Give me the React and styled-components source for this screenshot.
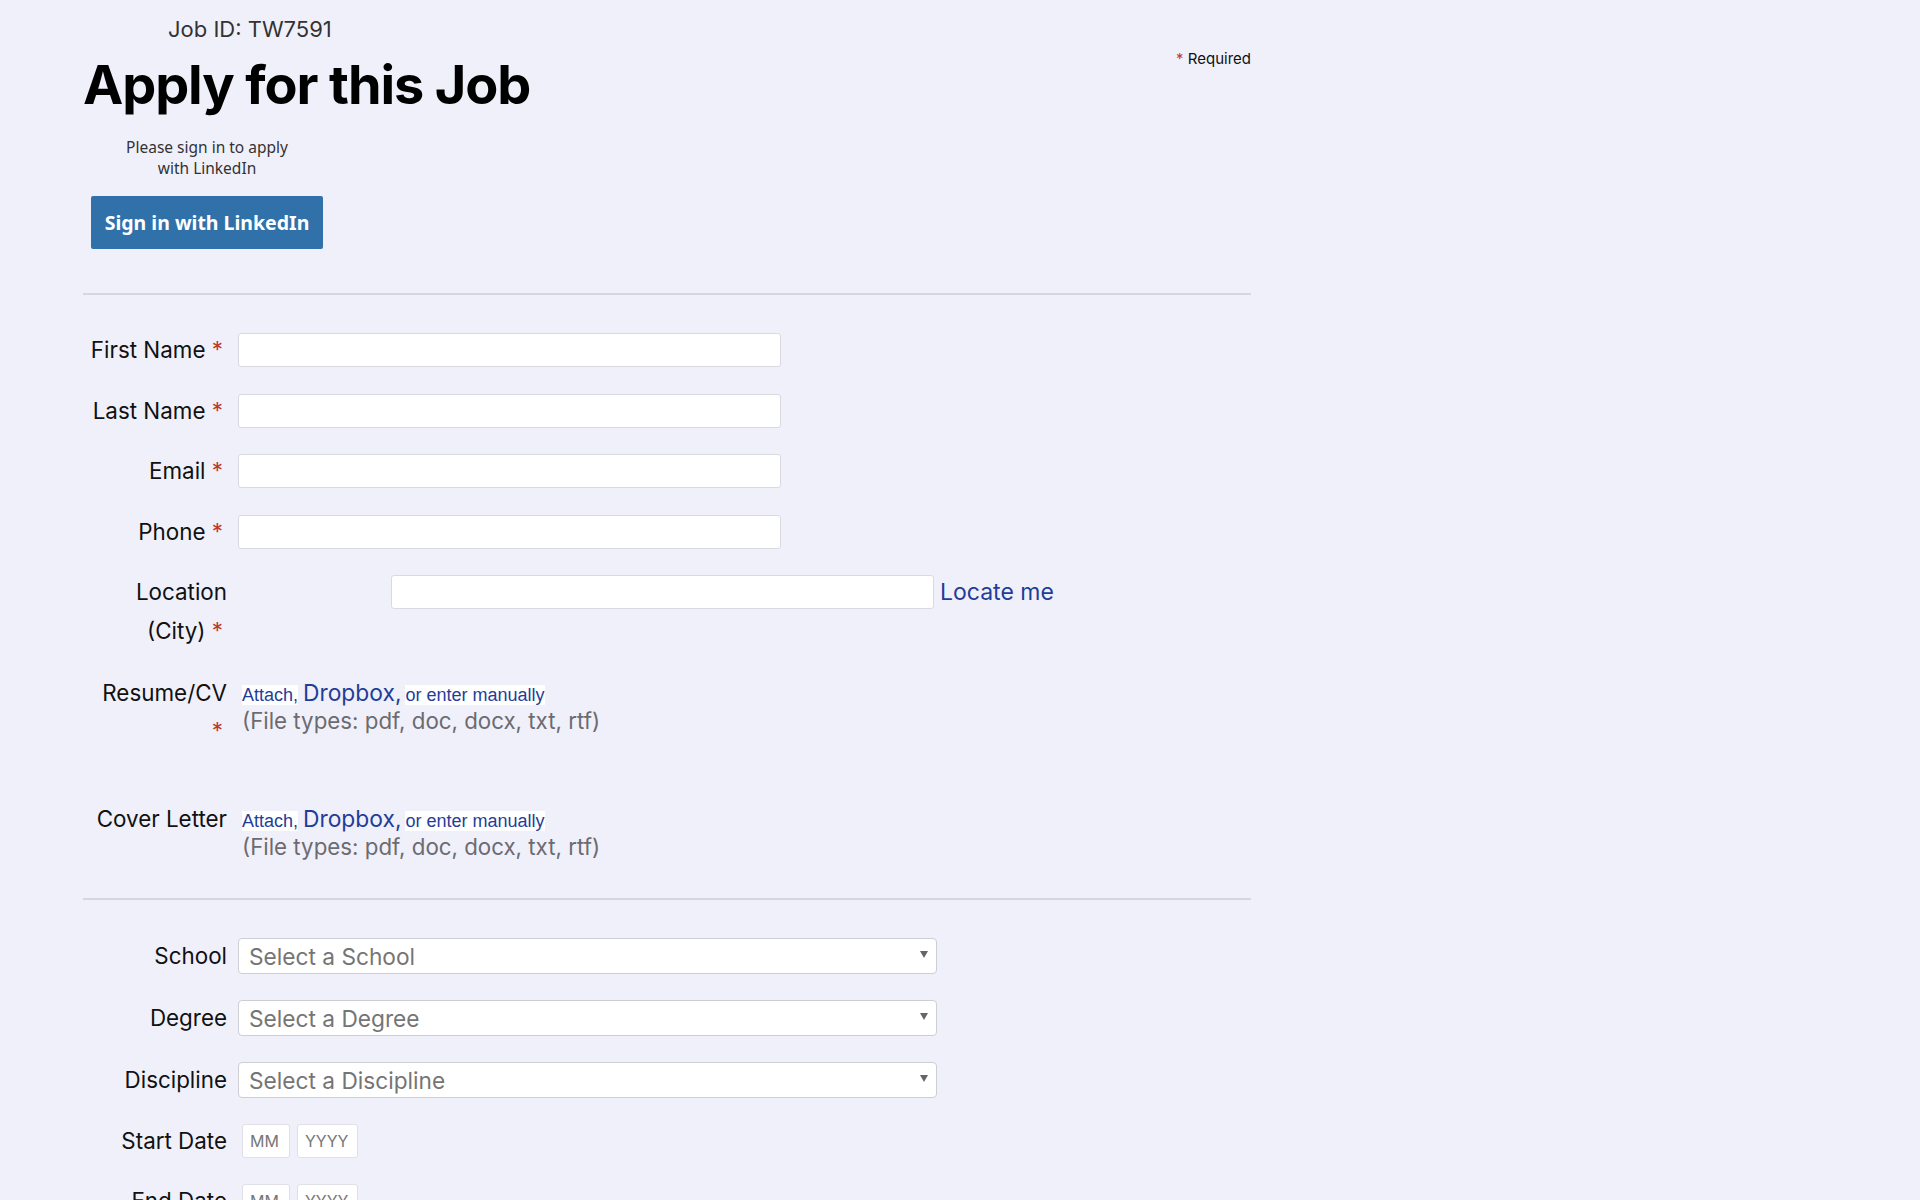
import React from "react";
import styled, { createGlobalStyle } from "styled-components";

const Global = createGlobalStyle`
  html, body { margin: 0; padding: 0; background: #f0f0fb; }
  body { font-family: Inter, "Liberation Sans", sans-serif; color: #111; }
  * { box-sizing: border-box; }
`;

const Page = styled.div`
  width: 1920px;
  min-height: 1200px;
  padding: 0 0 0 83px;
  background: #f0f0fb;
`;

const Container = styled.div`
  width: 1168px;
`;

const Header = styled.div`
  display: flex;
  justify-content: space-between;
  align-items: flex-start;
`;

const HeaderLeft = styled.div`
  display: flex;
  flex-direction: column;
`;

const JobId = styled.div`
  margin: 15px 0 0 85px;
  font-family: Inter, sans-serif;
  font-size: 22px;
  color: #333;
  line-height: 28px;
`;

const Title = styled.h1`
  margin: 10px 0 0 0;
  font-family: Inter, sans-serif;
  font-weight: 700;
  font-size: 54px;
  line-height: 64px;
  letter-spacing: -1.1px;
  color: #000;
`;

const Required = styled.div`
  margin-top: 49px;
  font-family: Inter, sans-serif;
  font-size: 15px;
  color: #111;
`;

const Star = styled.span`
  color: #c0392b;
  margin-right: ${(p) => p.$mr || 0}px;
`;

const SignIn = styled.div`
  display: flex;
  flex-direction: column;
  align-items: center;
  width: 232px;
  margin: 20px 0 0 8px;
`;

const SignInNote = styled.div`
  font-family: "Noto Sans", sans-serif;
  font-size: 15.5px;
  line-height: 21px;
  color: #333;
  text-align: center;
  width: 175px;
`;

const LinkedInButton = styled.button`
  margin-top: 17px;
  width: 232px;
  height: 53px;
  background: #3071a9;
  border: none;
  border-radius: 2px;
  color: #fff;
  font-family: "Noto Sans", sans-serif;
  font-weight: 700;
  font-size: 19.5px;
`;

const Rule = styled.hr`
  border: none;
  border-top: 2px solid #d6d6e0;
  margin: ${(p) => p.$top}px 0 0 0;
`;

const Fields = styled.div`
  display: flex;
  flex-direction: column;
  gap: ${(p) => p.$gap}px;
  margin-top: ${(p) => p.$top}px;
`;

const Row = styled.div`
  display: grid;
  grid-template-columns: 144px 1fr;
  column-gap: 11px;
  align-items: start;
  min-height: ${(p) => p.$min || 0}px;
`;

const Label = styled.label`
  font-family: Inter, sans-serif;
  font-size: 22.4px;
  line-height: ${(p) => p.$lh || 34}px;
  margin: ${(p) => p.$mt || 0}px 0 ${(p) => p.$mb || 0}px 0;
  padding-left: 4px;
  text-align: right;
  color: #111;
`;

const TextInput = styled.input`
  width: ${(p) => p.$w || 543}px;
  height: 34px;
  margin-left: ${(p) => p.$offset || 0}px;
  background: #fff;
  border: 1px solid #d9d9e0;
  border-radius: 3px;
  padding: 0 8px;
  font-size: 16px;
`;

const InlineGroup = styled.div`
  display: flex;
  align-items: center;
  gap: 6px;
`;

const LocateLink = styled.a`
  font-family: Inter, sans-serif;
  font-size: 23px;
  color: #1f3d99;
  text-decoration: none;
`;

const Upload = styled.div`
  padding: 5px 0 0 4px;
  display: flex;
  flex-direction: column;
`;

const UploadLinks = styled.div`
  line-height: 26px;
  color: #1f3d99;
  white-space: nowrap;
`;

const SmallLink = styled.span`
  font-family: "Liberation Sans", Arial, sans-serif;
  font-size: 18px;
  background: #fff;
  color: #1f3d99;
`;

const BigLink = styled.span`
  font-family: Inter, sans-serif;
  font-size: 22.8px;
  color: #1f3d99;
  margin: 0 4px 0 5px;
`;

const FileTypes = styled.div`
  font-family: Inter, sans-serif;
  font-size: 22.3px;
  line-height: 26px;
  color: #6b6b70;
  white-space: nowrap;
`;

const SelectBox = styled.div`
  width: 699px;
  height: 36px;
  background: #fff;
  border: 1px solid #cdcdd4;
  border-radius: 4px;
  display: flex;
  align-items: center;
  justify-content: space-between;
  padding: 0 8px 0 10px;
`;

const SelectText = styled.span`
  font-family: Inter, sans-serif;
  font-size: 22.7px;
  color: #757575;
`;

const Caret = styled.span`
  width: 0;
  height: 0;
  border-left: 4px solid transparent;
  border-right: 4px solid transparent;
  border-top: 7px solid #666;
  margin-top: -4px;
`;

const DateGroup = styled.div`
  display: flex;
  gap: 7px;
  padding-left: 4px;
`;

const DateInput = styled.div`
  width: ${(p) => p.$w}px;
  height: 34px;
  background: #fff;
  border: 1px solid #e0e0e6;
  border-radius: 3px;
  display: flex;
  align-items: center;
  padding-left: 7px;
  font-family: Inter, sans-serif;
  font-size: 16px;
  color: #777;
`;

const Req = () => <Star $mr={4}> *</Star>;

const UploadField = () => (
  <Upload>
    <UploadLinks>
      <SmallLink>Attach,</SmallLink>
      <BigLink>Dropbox,</BigLink>
      <SmallLink>or enter manually</SmallLink>
    </UploadLinks>
    <FileTypes>(File types: pdf, doc, docx, txt, rtf)</FileTypes>
  </Upload>
);

const Select = ({ text }) => (
  <SelectBox>
    <SelectText>{text}</SelectText>
    <Caret />
  </SelectBox>
);

const DateField = () => (
  <DateGroup>
    <DateInput $w={48}>MM</DateInput>
    <DateInput $w={61}>YYYY</DateInput>
  </DateGroup>
);

export default function App() {
  return (
    <>
      <Global />
      <Page>
        <Container>
          <Header>
            <HeaderLeft>
              <JobId>Job ID: TW7591</JobId>
              <Title>Apply for this Job</Title>
            </HeaderLeft>
            <Required>
              <Star>*</Star> Required
            </Required>
          </Header>
          <SignIn>
            <SignInNote>Please sign in to apply with LinkedIn</SignInNote>
            <LinkedInButton>Sign in with LinkedIn</LinkedInButton>
          </SignIn>

          <Rule $top={44} />

          <Fields $gap={26.5} $top={38}>
            <Row>
              <Label>First Name<Req /></Label>
              <TextInput />
            </Row>
            <Row>
              <Label>Last Name<Req /></Label>
              <TextInput />
            </Row>
            <Row>
              <Label>Email<Req /></Label>
              <TextInput />
            </Row>
            <Row>
              <Label>Phone<Req /></Label>
              <TextInput />
            </Row>
            <Row>
              <Label $lh={39} $mt={-3} $mb={-2}>Location (City)<Req /></Label>
              <InlineGroup>
                <TextInput $offset={153} />
                <LocateLink href="#">Locate me</LocateLink>
              </InlineGroup>
            </Row>
            <Row $min={100}>
              <Label $lh={38} $mt={-1}>Resume/CV<Req /></Label>
              <UploadField />
            </Row>
            <Row>
              <Label $lh={36}>Cover Letter</Label>
              <UploadField />
            </Row>
          </Fields>

          <Rule $top={38} />

          <Fields $gap={26} $top={38}>
            <Row>
              <Label $lh={36}>School</Label>
              <Select text="Select a School" />
            </Row>
            <Row>
              <Label $lh={36}>Degree</Label>
              <Select text="Select a Degree" />
            </Row>
            <Row>
              <Label $lh={36}>Discipline</Label>
              <Select text="Select a Discipline" />
            </Row>
            <Row>
              <Label>Start Date</Label>
              <DateField />
            </Row>
            <Row>
              <Label>End Date</Label>
              <DateField />
            </Row>
          </Fields>
        </Container>
      </Page>
    </>
  );
}
